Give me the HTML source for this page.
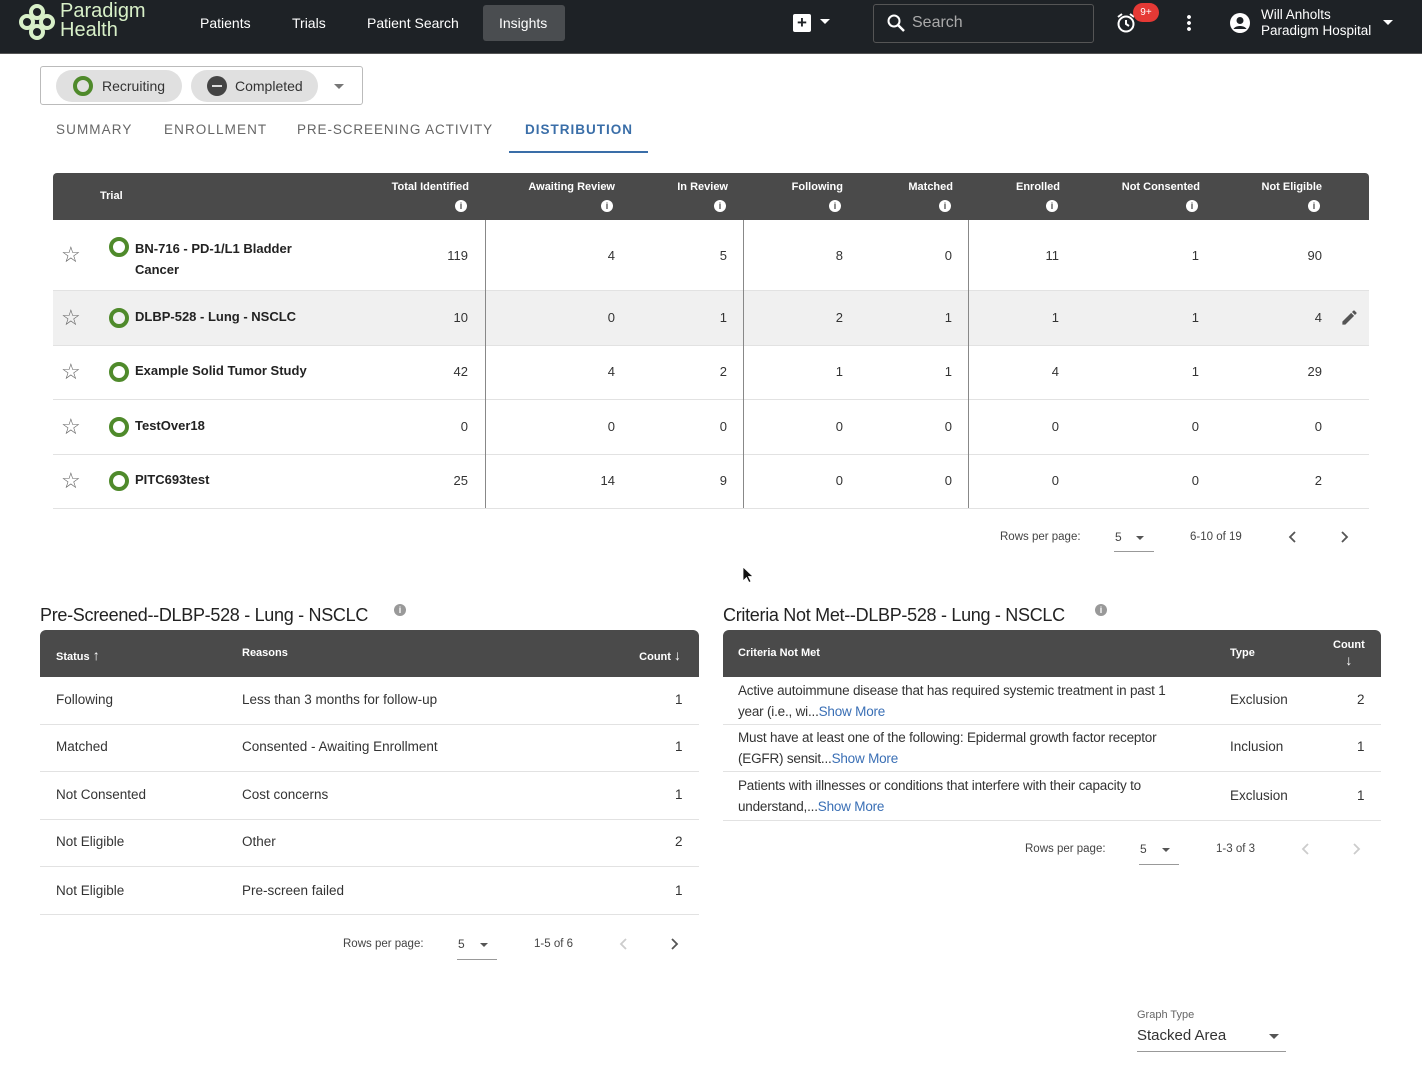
<!DOCTYPE html>
<html><head><meta charset="utf-8"><style>
*{margin:0;padding:0;box-sizing:border-box}
html,body{width:1422px;height:1080px;overflow:hidden}
body{position:relative;background:#fff;font-family:"Liberation Sans",Arial,sans-serif;color:#222}
.a{position:absolute;white-space:nowrap}
.nav{left:0;top:0;width:1422px;height:54px;background:#1e2226;border-bottom:1px solid #555}
.nl{color:#fff;font-size:14px;top:15px}
.hd{background:#4a4a4a;color:#fff;font-weight:bold;font-size:11px}
.r{text-align:right}
.ring{width:20px;height:20px;border:4px solid #4f8a2b;border-radius:50%}
.info{width:12px;height:12px;border-radius:50%;background:#fff;color:#4a4a4a;font-size:9px;font-weight:bold;text-align:center;line-height:12px}
.star{font-size:22px;color:#666;line-height:22px}
.vl{width:1px;background:#888;top:220px;height:288px}
.hl{height:1px;background:#e2e2e2}
.t13{font-size:13.5px;color:#333}
.link{color:#3a6fb5}
.n{position:absolute;font-size:13px;color:#333;text-align:right;width:60px}
.c0{left:408px}.c1{left:555px}.c2{left:667px}.c3{left:783px}.c4{left:892px}.c5{left:999px}.c6{left:1139px}.c7{left:1262px}
.y0{top:248px}.y1{top:310px}.y2{top:364px}.y3{top:419px}.y4{top:473px}
</style></head><body>
<div class="a nav"></div>
<svg class="a" style="left:18px;top:3px" width="38" height="38" viewBox="0 0 38 38"><g fill="none" stroke="#d8f0c8" stroke-width="4"><circle cx="19" cy="9" r="6"/><circle cx="19" cy="29" r="6"/><circle cx="9" cy="19" r="6"/><circle cx="29" cy="19" r="6"/></g></svg>
<div class="a" style="left:60px;top:2px;color:#d8f0c8;font-size:20px;line-height:19px">Paradigm<br>Health</div>
<div class="a nl" style="left:200px">Patients</div>
<div class="a nl" style="left:292px">Trials</div>
<div class="a nl" style="left:367px">Patient Search</div>
<div class="a" style="left:483px;top:5px;width:82px;height:36px;background:#4a4d50;border-radius:3px"></div>
<div class="a nl" style="left:499px">Insights</div>
<div class="a" style="left:793px;top:14px;width:18px;height:18px;background:#fff;border-radius:2px;color:#1e2226;font-weight:bold;font-size:17px;text-align:center;line-height:18px">+</div>
<div class="a" style="left:820px;top:19px;border-left:5px solid transparent;border-right:5px solid transparent;border-top:5px solid #fff"></div>
<div class="a" style="left:873px;top:4px;width:221px;height:39px;border:1px solid #555;border-radius:3px"></div>
<svg class="a" style="left:886px;top:13px" width="20" height="20" viewBox="0 0 20 20"><circle cx="8" cy="8" r="5.5" fill="none" stroke="#fff" stroke-width="2"/><path d="M12 12 L18 18" stroke="#fff" stroke-width="2.5"/></svg>
<div class="a" style="left:912px;top:14px;color:#aaa;font-size:16px">Search</div>
<svg class="a" style="left:1115px;top:12px" width="22" height="22" viewBox="0 0 22 22"><circle cx="11" cy="12" r="7.5" fill="none" stroke="#fff" stroke-width="2"/><path d="M11 8v4l3 2M3 5l4-3M19 5l-4-3" stroke="#fff" stroke-width="2" fill="none"/></svg>
<div class="a" style="left:1133px;top:3px;width:26px;height:19px;background:#e53935;border-radius:10px;color:#fff;font-size:10px;text-align:center;line-height:19px">9+</div>
<div class="a" style="left:1187px;top:14px;width:4px;height:18px;background:radial-gradient(circle,#fff 1.8px,transparent 2px) 0 0/4px 6px"></div>
<svg class="a" style="left:1229px;top:12px" width="22" height="22" viewBox="0 0 22 22"><circle cx="11" cy="11" r="10" fill="#fff"/><circle cx="11" cy="8.5" r="3.5" fill="#1e2226"/><path d="M4.5 17c2-4 11-4 13 0" fill="#1e2226"/></svg>
<div class="a" style="left:1261px;top:7px;color:#fff;font-size:13.5px;line-height:16px">Will Anholts<br>Paradigm Hospital</div>
<div class="a" style="left:1383px;top:20px;border-left:5px solid transparent;border-right:5px solid transparent;border-top:5px solid #fff"></div>

<div class="a" style="left:40px;top:66px;width:323px;height:39px;border:1px solid #bbb;border-radius:3px"></div>
<div class="a" style="left:56px;top:70px;width:126px;height:32px;background:#e0e0e0;border-radius:16px"></div>
<div class="a ring" style="left:73px;top:76px"></div>
<div class="a" style="left:102px;top:78px;font-size:14px;color:#333">Recruiting</div>
<div class="a" style="left:191px;top:70px;width:127px;height:32px;background:#e0e0e0;border-radius:16px"></div>
<div class="a" style="left:207px;top:76px;width:20px;height:20px;background:#444;border-radius:50%"><div style="margin:9px 5px;height:2px;background:#ddd"></div></div>
<div class="a" style="left:235px;top:78px;font-size:14px;color:#333">Completed</div>
<div class="a" style="left:334px;top:84px;border-left:5px solid transparent;border-right:5px solid transparent;border-top:5px solid #777"></div>
<div class="a" style="left:56px;top:122px;font-size:13.5px;letter-spacing:1.1px;color:#666">SUMMARY</div>
<div class="a" style="left:164px;top:122px;font-size:13.5px;letter-spacing:1.1px;color:#666">ENROLLMENT</div>
<div class="a" style="left:297px;top:122px;font-size:13.5px;letter-spacing:0.9px;color:#666">PRE-SCREENING ACTIVITY</div>
<div class="a" style="left:525px;top:122px;font-size:13.5px;letter-spacing:1px;color:#3a6ea8;font-weight:bold">DISTRIBUTION</div>
<div class="a" style="left:509px;top:151px;width:139px;height:2px;background:#3a6ea8"></div>

<div class="a hd" style="left:53px;top:173px;width:1316px;height:47px;border-radius:4px 4px 0 0"></div>
<div class="a hd" style="left:100px;top:190px;background:none">Trial</div>
<div class="a" style="left:53px;top:290px;width:1316px;height:55px;background:#f0f0f0"></div>
<div class="a hl" style="left:53px;top:290px;width:1316px"></div>
<div class="a hl" style="left:53px;top:345px;width:1316px"></div>
<div class="a hl" style="left:53px;top:399px;width:1316px"></div>
<div class="a hl" style="left:53px;top:454px;width:1316px"></div>
<div class="a hl" style="left:53px;top:508px;width:1316px"></div>
<div class="a vl" style="left:485px"></div><div class="a vl" style="left:743px"></div><div class="a vl" style="left:968px"></div>

<div class="a hd r" style="right:953px;top:181px;background:none">Total Identified</div><div class="a info" style="left:455px;top:200px">i</div>
<div class="a hd r" style="right:807px;top:181px;background:none">Awaiting Review</div><div class="a info" style="left:601px;top:200px">i</div>
<div class="a hd r" style="right:694px;top:181px;background:none">In Review</div><div class="a info" style="left:714px;top:200px">i</div>
<div class="a hd r" style="right:579px;top:181px;background:none">Following</div><div class="a info" style="left:829px;top:200px">i</div>
<div class="a hd r" style="right:469px;top:181px;background:none">Matched</div><div class="a info" style="left:939px;top:200px">i</div>
<div class="a hd r" style="right:362px;top:181px;background:none">Enrolled</div><div class="a info" style="left:1046px;top:200px">i</div>
<div class="a hd r" style="right:222px;top:181px;background:none">Not Consented</div><div class="a info" style="left:1186px;top:200px">i</div>
<div class="a hd r" style="right:100px;top:181px;background:none">Not Eligible</div><div class="a info" style="left:1308px;top:200px">i</div>

<div class="a star" style="left:61px;top:244px">☆</div><div class="a ring" style="left:109px;top:237px"></div>
<div class="a" style="left:135px;top:238px;font-size:13px;font-weight:bold;line-height:21px">BN-716 - PD-1/L1 Bladder<br>Cancer</div>
<div class="a star" style="left:61px;top:307px">☆</div><div class="a ring" style="left:109px;top:308px"></div>
<div class="a" style="left:135px;top:309px;font-size:13px;font-weight:bold">DLBP-528 - Lung - NSCLC</div>
<div class="a star" style="left:61px;top:361px">☆</div><div class="a ring" style="left:109px;top:362px"></div>
<div class="a" style="left:135px;top:363px;font-size:13px;font-weight:bold">Example Solid Tumor Study</div>
<div class="a star" style="left:61px;top:416px">☆</div><div class="a ring" style="left:109px;top:417px"></div>
<div class="a" style="left:135px;top:418px;font-size:13px;font-weight:bold">TestOver18</div>
<div class="a star" style="left:61px;top:470px">☆</div><div class="a ring" style="left:109px;top:471px"></div>
<div class="a" style="left:135px;top:472px;font-size:13px;font-weight:bold">PITC693test</div>
<svg class="a" style="left:1340px;top:308px" width="19" height="19" viewBox="0 0 24 24"><path d="M3 17.25V21h3.75L17.81 9.94l-3.75-3.75L3 17.25zM20.71 7.04a1 1 0 000-1.41l-2.34-2.34a1 1 0 00-1.41 0l-1.83 1.83 3.75 3.75 1.83-1.83z" fill="#555"/></svg>

<div class="n c0 y0">119</div><div class="n c1 y0">4</div><div class="n c2 y0">5</div><div class="n c3 y0">8</div><div class="n c4 y0">0</div><div class="n c5 y0">11</div><div class="n c6 y0">1</div><div class="n c7 y0">90</div>
<div class="n c0 y1">10</div><div class="n c1 y1">0</div><div class="n c2 y1">1</div><div class="n c3 y1">2</div><div class="n c4 y1">1</div><div class="n c5 y1">1</div><div class="n c6 y1">1</div><div class="n c7 y1">4</div>
<div class="n c0 y2">42</div><div class="n c1 y2">4</div><div class="n c2 y2">2</div><div class="n c3 y2">1</div><div class="n c4 y2">1</div><div class="n c5 y2">4</div><div class="n c6 y2">1</div><div class="n c7 y2">29</div>
<div class="n c0 y3">0</div><div class="n c1 y3">0</div><div class="n c2 y3">0</div><div class="n c3 y3">0</div><div class="n c4 y3">0</div><div class="n c5 y3">0</div><div class="n c6 y3">0</div><div class="n c7 y3">0</div>
<div class="n c0 y4">25</div><div class="n c1 y4">14</div><div class="n c2 y4">9</div><div class="n c3 y4">0</div><div class="n c4 y4">0</div><div class="n c5 y4">0</div><div class="n c6 y4">0</div><div class="n c7 y4">2</div>

<div class="a" style="left:1000px;top:531px;font-size:11.5px;color:#444">Rows per page:</div>
<div class="a" style="left:1115px;top:530px;font-size:12px;color:#444">5</div>
<div class="a" style="left:1136px;top:536px;border-left:4px solid transparent;border-right:4px solid transparent;border-top:4px solid #555"></div>
<div class="a" style="left:1114px;top:551px;width:40px;height:1px;background:#999"></div>
<div class="a" style="left:1190px;top:531px;font-size:11.5px;color:#444">6-10 of 19</div>
<svg class="a" style="left:1288px;top:531px" width="10" height="12" viewBox="0 0 10 12"><path d="M7 1L2 6l5 5" fill="none" stroke="#555" stroke-width="1.8"/></svg>
<svg class="a" style="left:1339px;top:531px" width="10" height="12" viewBox="0 0 10 12"><path d="M3 1l5 5-5 5" fill="none" stroke="#555" stroke-width="1.8"/></svg>
<svg class="a" style="left:742px;top:566px" width="12" height="18" viewBox="0 0 12 18"><path d="M1 1v14l3.5-3.5 2.5 5 2-1-2.5-5H11z" fill="#111" stroke="#fff" stroke-width="0.8"/></svg>

<div class="a" style="left:40px;top:605px;font-size:18px;color:#222;letter-spacing:-0.3px">Pre-Screened--DLBP-528 - Lung - NSCLC</div>
<div class="a info" style="left:394px;top:604px;background:#999;color:#fff">i</div>
<div class="a hd" style="left:40px;top:630px;width:659px;height:47px;border-radius:6px 6px 0 0"></div>
<div class="a hd" style="left:56px;top:647px;background:none">Status <span style="font-size:14px">↑</span></div>
<div class="a hd" style="left:242px;top:647px;background:none">Reasons</div>
<div class="a hd r" style="right:741px;top:647px;background:none">Count <span style="font-size:14px">↓</span></div>
<div class="a hl" style="left:40px;top:724px;width:659px"></div>
<div class="a hl" style="left:40px;top:771px;width:659px"></div>
<div class="a hl" style="left:40px;top:819px;width:659px"></div>
<div class="a hl" style="left:40px;top:866px;width:659px"></div>
<div class="a hl" style="left:40px;top:914px;width:659px"></div>
<div class="a t13" style="left:56px;top:692px">Following</div><div class="a t13" style="left:242px;top:692px">Less than 3 months for follow-up</div><div class="a t13" style="left:675px;top:692px">1</div>
<div class="a t13" style="left:56px;top:739px">Matched</div><div class="a t13" style="left:242px;top:739px">Consented - Awaiting Enrollment</div><div class="a t13" style="left:675px;top:739px">1</div>
<div class="a t13" style="left:56px;top:787px">Not Consented</div><div class="a t13" style="left:242px;top:787px">Cost concerns</div><div class="a t13" style="left:675px;top:787px">1</div>
<div class="a t13" style="left:56px;top:834px">Not Eligible</div><div class="a t13" style="left:242px;top:834px">Other</div><div class="a t13" style="left:675px;top:834px">2</div>
<div class="a t13" style="left:56px;top:883px">Not Eligible</div><div class="a t13" style="left:242px;top:883px">Pre-screen failed</div><div class="a t13" style="left:675px;top:883px">1</div>
<div class="a" style="left:343px;top:938px;font-size:11.5px;color:#444">Rows per page:</div>
<div class="a" style="left:458px;top:937px;font-size:12px;color:#444">5</div>
<div class="a" style="left:480px;top:943px;border-left:4px solid transparent;border-right:4px solid transparent;border-top:4px solid #555"></div>
<div class="a" style="left:457px;top:959px;width:40px;height:1px;background:#999"></div>
<div class="a" style="left:534px;top:938px;font-size:11.5px;color:#444">1-5 of 6</div>
<svg class="a" style="left:619px;top:938px" width="10" height="12" viewBox="0 0 10 12"><path d="M7 1L2 6l5 5" fill="none" stroke="#ccc" stroke-width="1.8"/></svg>
<svg class="a" style="left:669px;top:938px" width="10" height="12" viewBox="0 0 10 12"><path d="M3 1l5 5-5 5" fill="none" stroke="#555" stroke-width="1.8"/></svg>

<div class="a" style="left:723px;top:605px;font-size:18px;color:#222;letter-spacing:-0.3px">Criteria Not Met--DLBP-528 - Lung - NSCLC</div>
<div class="a info" style="left:1095px;top:604px;background:#999;color:#fff">i</div>
<div class="a hd" style="left:723px;top:630px;width:658px;height:47px;border-radius:6px 6px 0 0"></div>
<div class="a hd" style="left:738px;top:647px;background:none">Criteria Not Met</div>
<div class="a hd" style="left:1230px;top:647px;background:none">Type</div>
<div class="a hd" style="left:1333px;top:638px;background:none;text-align:center;line-height:15px">Count<br><span style="font-size:14px">↓</span></div>
<div class="a hl" style="left:723px;top:724px;width:658px"></div>
<div class="a hl" style="left:723px;top:771px;width:658px"></div>
<div class="a hl" style="left:723px;top:820px;width:658px"></div>
<div class="a t13" style="left:738px;top:680px;line-height:21px;letter-spacing:-0.2px">Active autoimmune disease that has required systemic treatment in past 1<br>year (i.e., wi...<span class="link">Show More</span></div>
<div class="a t13" style="left:1230px;top:692px">Exclusion</div><div class="a t13" style="left:1357px;top:692px">2</div>
<div class="a t13" style="left:738px;top:727px;line-height:21px;letter-spacing:-0.2px">Must have at least one of the following: Epidermal growth factor receptor<br>(EGFR) sensit...<span class="link">Show More</span></div>
<div class="a t13" style="left:1230px;top:739px">Inclusion</div><div class="a t13" style="left:1357px;top:739px">1</div>
<div class="a t13" style="left:738px;top:775px;line-height:21px;letter-spacing:-0.2px">Patients with illnesses or conditions that interfere with their capacity to<br>understand,...<span class="link">Show More</span></div>
<div class="a t13" style="left:1230px;top:788px">Exclusion</div><div class="a t13" style="left:1357px;top:788px">1</div>
<div class="a" style="left:1025px;top:843px;font-size:11.5px;color:#444">Rows per page:</div>
<div class="a" style="left:1140px;top:842px;font-size:12px;color:#444">5</div>
<div class="a" style="left:1162px;top:848px;border-left:4px solid transparent;border-right:4px solid transparent;border-top:4px solid #555"></div>
<div class="a" style="left:1139px;top:864px;width:40px;height:1px;background:#999"></div>
<div class="a" style="left:1216px;top:843px;font-size:11.5px;color:#444">1-3 of 3</div>
<svg class="a" style="left:1301px;top:843px" width="10" height="12" viewBox="0 0 10 12"><path d="M7 1L2 6l5 5" fill="none" stroke="#ccc" stroke-width="1.8"/></svg>
<svg class="a" style="left:1351px;top:843px" width="10" height="12" viewBox="0 0 10 12"><path d="M3 1l5 5-5 5" fill="none" stroke="#ccc" stroke-width="1.8"/></svg>

<div class="a" style="left:1137px;top:1009px;font-size:11px;color:#666">Graph Type</div>
<div class="a" style="left:1137px;top:1027px;font-size:15px;color:#333">Stacked Area</div>
<div class="a" style="left:1269px;top:1034px;border-left:5px solid transparent;border-right:5px solid transparent;border-top:5px solid #555"></div>
<div class="a" style="left:1137px;top:1051px;width:149px;height:1px;background:#999"></div>
</body></html>
